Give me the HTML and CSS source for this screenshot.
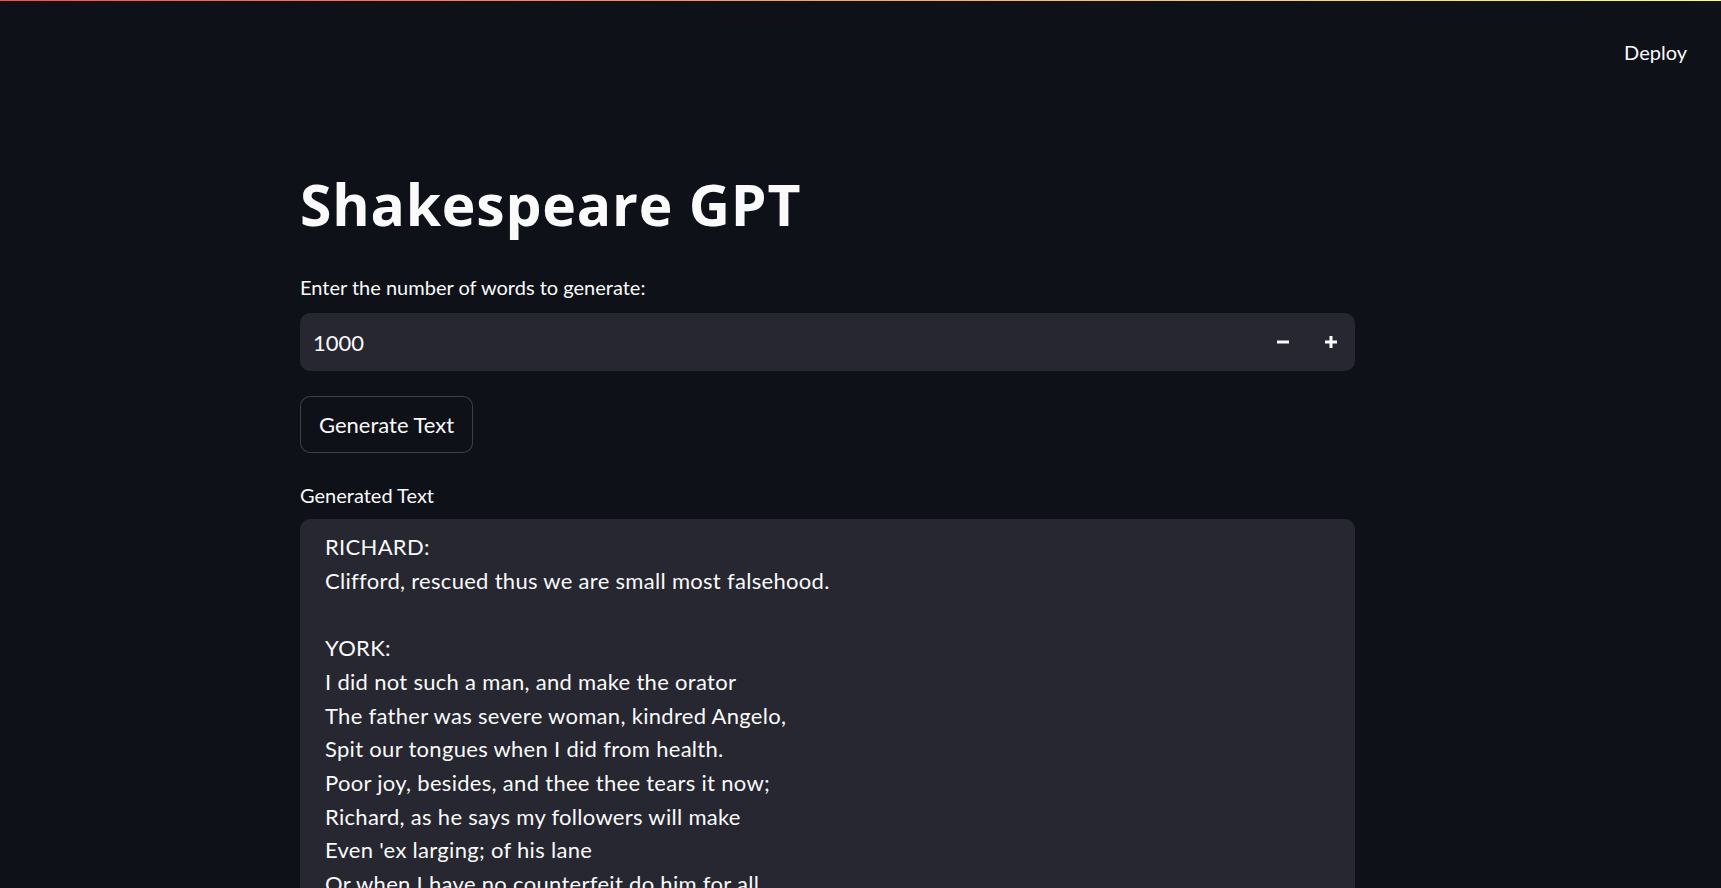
FILE: index.html
```html
<!DOCTYPE html>
<html lang="en">
<head>
<meta charset="utf-8">
<title>Shakespeare GPT</title>
<link rel="stylesheet" href="styles.css">
</head>
<body>
<div class="decoration"></div>
<header class="app-header">
  <button class="deploy">Deploy</button>
</header>
<main class="main">
  <h1 class="title">Shakespeare GPT</h1>
  <label class="widget-label" for="words">Enter the number of words to generate:</label>
  <div class="number-input">
    <input id="words" class="number-field" type="text" value="1000">
    <button class="step" aria-label="Decrement">
      <svg width="12" height="12" viewBox="0 0 12 12"><rect x="0" y="4.5" width="12" height="3" fill="#fafafa"/></svg>
    </button>
    <button class="step" aria-label="Increment">
      <svg width="12" height="12" viewBox="0 0 12 12"><rect x="0" y="4.5" width="12" height="3" fill="#fafafa"/><rect x="4.5" y="0" width="3" height="12" fill="#fafafa"/></svg>
    </button>
  </div>
  <div class="button-row">
    <button class="btn">Generate Text</button>
  </div>
  <label class="widget-label label-gen" for="gen">Generated Text</label>
  <textarea id="gen" class="output" readonly>RICHARD:
Clifford, rescued thus we are small most falsehood.

YORK:
I did not such a man, and make the orator
The father was severe woman, kindred Angelo,
Spit our tongues when I did from health.
Poor joy, besides, and thee thee tears it now;
Richard, as he says my followers will make
Even 'ex larging; of his lane
Or when I have no counterfeit do him for all
That thou art loved to see the duke of York.</textarea>
</main>
</body>
</html>
```
FILE: styles.css
```css
html, body {
  margin: 0;
  padding: 0;
  height: 100%;
  overflow: hidden;
}
body {
  background: #0e1117;
  color: #fafafa;
  font-family: Lato, "Liberation Sans", sans-serif;
}
.decoration {
  height: 1px;
  background: linear-gradient(90deg, #ff4b4b, #fffd80);
}
.app-header {
  display: flex;
  justify-content: flex-end;
  padding: 37px 34px 0 0;
  height: 52px;
}
.deploy {
  background: none;
  border: none;
  color: #fafafa;
  font-family: Lato, "Liberation Sans", sans-serif;
  font-size: 20px;
  line-height: 28px;
  padding: 0;
  height: 28px;
}
.main {
  display: flex;
  flex-direction: column;
  width: 1055px;
  margin-left: 300px;
}
.title {
  margin: 82px 0 0 0;
  font-family: "Open Sans", Lato, sans-serif;
  font-size: 57px;
  font-weight: 700;
  line-height: 65px;
  letter-spacing: 0.8px;
}
.widget-label {
  display: block;
  font-size: 20px;
  line-height: 28px;
  margin-top: 36px;
}
.number-input {
  display: flex;
  align-items: center;
  height: 58px;
  margin-top: 12px;
  background: #262730;
  border-radius: 10px;
}
.number-field {
  flex: 1;
  background: transparent;
  border: none;
  outline: none;
  color: #fafafa;
  font-family: Lato, "Liberation Sans", sans-serif;
  font-size: 22px;
  padding: 0 0 0 13px;
  height: 58px;
}
.step {
  width: 48px;
  height: 58px;
  display: flex;
  align-items: center;
  justify-content: center;
  background: none;
  border: none;
  padding: 0;
}
.button-row {
  display: flex;
  margin-top: 25px;
}
.btn {
  height: 57px;
  padding: 0 18px;
  background: #0e1117;
  border: 1px solid rgba(250, 250, 250, 0.2);
  border-radius: 10px;
  color: #fafafa;
  font-family: Lato, "Liberation Sans", sans-serif;
  font-size: 22px;
}
.label-gen {
  margin-top: 28px;
}
.output {
  margin-top: 10px;
  height: 480px;
  box-sizing: border-box;
  background: #262730;
  border: 1px solid #262730;
  border-radius: 10px;
  color: #fafafa;
  font-family: Lato, "Liberation Sans", sans-serif;
  font-size: 22px;
  line-height: 33.7px;
  letter-spacing: 0.3px;
  padding: 10px 24px;
  resize: none;
  outline: none;
  overflow: hidden;
}
```
